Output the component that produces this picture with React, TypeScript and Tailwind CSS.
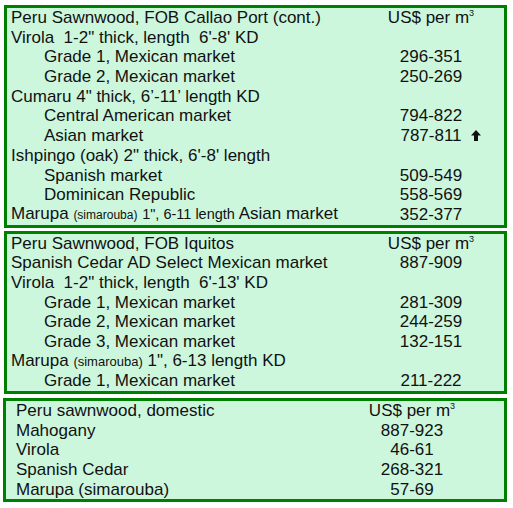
import React from 'react';

type Row = {
  label: React.ReactNode;
  price?: React.ReactNode;
  indent?: boolean;
  arrow?: boolean;
};

const perM3 = (
  <>
    US$ per m<sup className="text-[9px] top-[-7px]">3</sup>
  </>
);

const callao: Row[] = [
  { label: 'Peru Sawnwood, FOB Callao Port (cont.)', price: perM3 },
  { label: <>Virola&nbsp; 1-2" thick, length&nbsp; 6'-8' KD</> },
  { label: 'Grade 1, Mexican market', price: '296-351', indent: true },
  { label: 'Grade 2, Mexican market', price: '250-269', indent: true },
  { label: 'Cumaru 4" thick, 6’-11’ length KD' },
  { label: 'Central American market', price: '794-822', indent: true },
  { label: 'Asian market', price: '787-811', indent: true, arrow: true },
  { label: 'Ishpingo (oak) 2" thick, 6\'-8\' length' },
  { label: 'Spanish market', price: '509-549', indent: true },
  { label: 'Dominican Republic', price: '558-569', indent: true },
  {
    label: (
      <>
        Marupa <span className="text-[12px]">(simarouba)</span>{' '}
        <span className="text-[14.5px]">1", 6-11 length</span> Asian market
      </>
    ),
    price: '352-377',
  },
];

const iquitos: Row[] = [
  { label: 'Peru Sawnwood, FOB Iquitos', price: perM3 },
  { label: 'Spanish Cedar AD Select Mexican market', price: '887-909' },
  { label: <>Virola&nbsp; 1-2" thick, length&nbsp; 6'-13' KD</> },
  { label: 'Grade 1, Mexican market', price: '281-309', indent: true },
  { label: 'Grade 2, Mexican market', price: '244-259', indent: true },
  { label: 'Grade 3, Mexican market', price: '132-151', indent: true },
  {
    label: (
      <>
        Marupa <span className="text-[13px]">(simarouba)</span> 1", 6-13 length KD
      </>
    ),
  },
  { label: 'Grade 1, Mexican market', price: '211-222', indent: true },
];

const domestic: Row[] = [
  { label: 'Peru sawnwood, domestic', price: perM3 },
  { label: 'Mahogany', price: '887-923' },
  { label: 'Virola', price: '46-61' },
  { label: 'Spanish Cedar', price: '268-321' },
  { label: 'Marupa (simarouba)', price: '57-69' },
];

function ArrowUp() {
  return (
    <svg
      className="absolute left-full top-[4px] ml-[9px]"
      width="10"
      height="11"
      viewBox="0 0 10 11"
    >
      <path d="M5 0 L10 5.5 L7 5.5 L7 11 L3 11 L3 5.5 L0 5.5 Z" fill="#111" />
    </svg>
  );
}

function PriceBox({
  rows,
  className,
  priceClass,
}: {
  rows: Row[];
  className: string;
  priceClass: string;
}) {
  return (
    <div className={`border-[3px] border-[#008000] bg-[#cdf7dd] ${className}`}>
      {rows.map((r, i) => (
        <div key={i} className="flex h-[19.7px] items-center whitespace-nowrap">
          <div className={`flex-1 ${r.indent ? 'pl-[33px]' : ''}`}>{r.label}</div>
          <div className={`w-[96px] text-center ${priceClass}`}>
            {r.price && (
              <span className="relative inline-block">
                {r.price}
                {r.arrow && <ArrowUp />}
              </span>
            )}
          </div>
        </div>
      ))}
    </div>
  );
}

export default function App() {
  return (
    <div className="w-[513px] h-[508px] bg-white pt-[5px] text-[17px] leading-[19.7px] text-[#111] font-['Liberation_Sans',Arial,sans-serif]">
      <PriceBox
        rows={callao}
        className="ml-[4px] w-[503px] pl-[4px]"
        priceClass="mr-[25px]"
      />
      <PriceBox
        rows={iquitos}
        className="ml-[4px] mt-[3px] w-[503px] pl-[4px]"
        priceClass="mr-[25px]"
      />
      <PriceBox
        rows={domestic}
        className="ml-[3px] mt-[4px] w-[504px] pl-[10px] h-[104px]"
        priceClass="mr-[44px]"
      />
    </div>
  );
}
